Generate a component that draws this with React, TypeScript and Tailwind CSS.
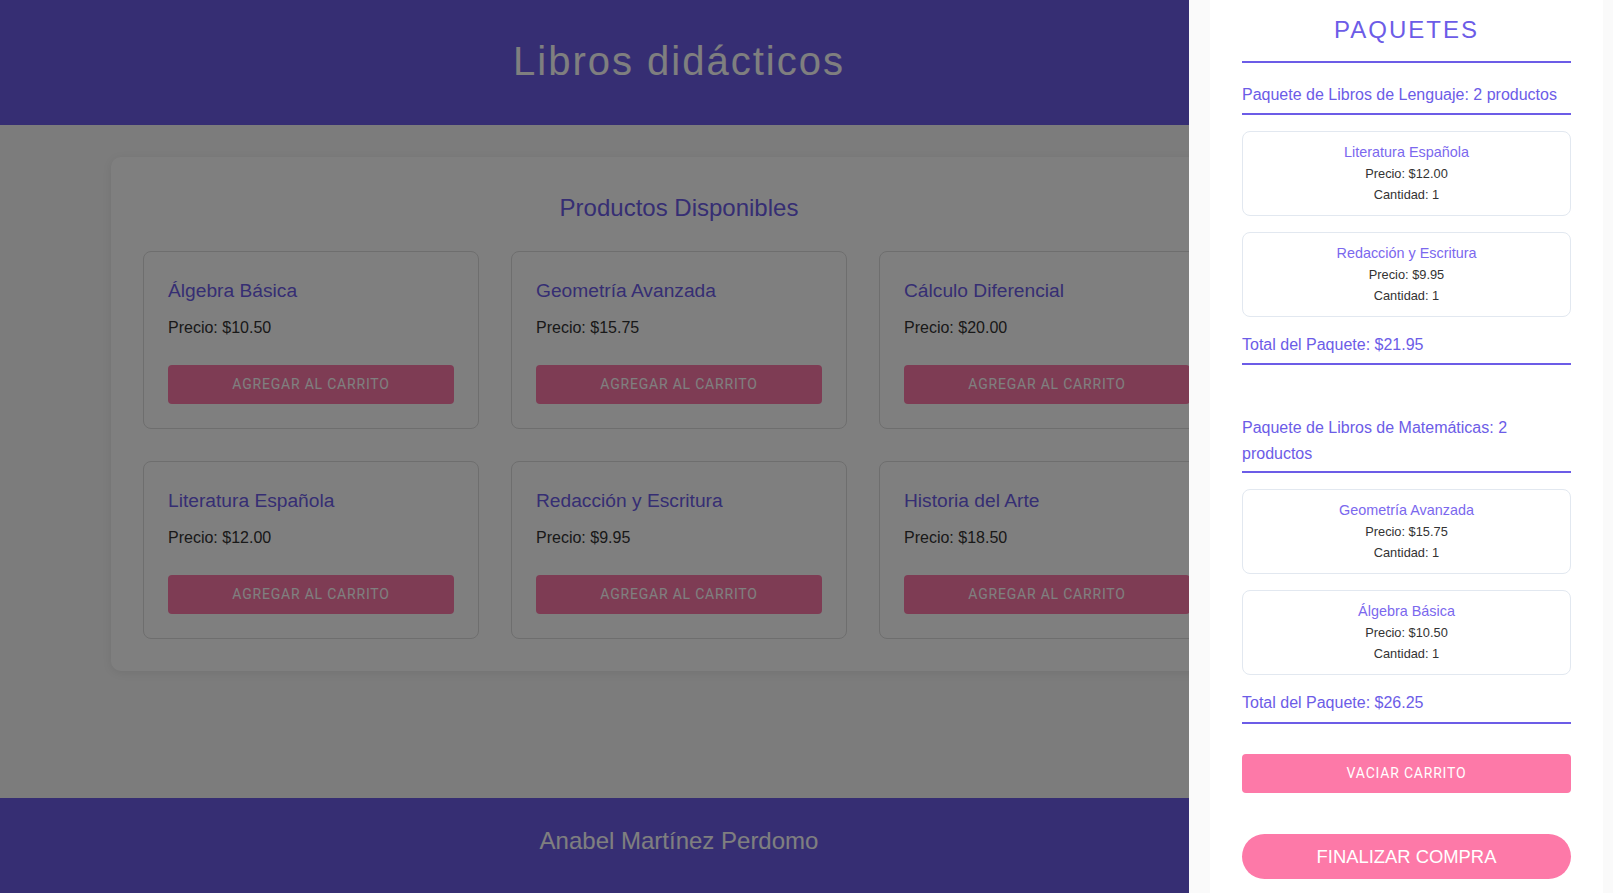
import React from "react";

interface Product {
    name: string;
    price: number;
}

interface Pack {
    title: string;
    items: Product[];
}

const products: Product[] = [
    { name: "Álgebra Básica", price: 10.5 },
    { name: "Geometría Avanzada", price: 15.75 },
    { name: "Cálculo Diferencial", price: 20 },
    { name: "Literatura Española", price: 12 },
    { name: "Redacción y Escritura", price: 9.95 },
    { name: "Historia del Arte", price: 18.5 },
];

const packs: Pack[] = [
    {
        title: "Paquete de Libros de Lenguaje",
        items: [
            { name: "Literatura Española", price: 12 },
            { name: "Redacción y Escritura", price: 9.95 },
        ],
    },
    {
        title: "Paquete de Libros de Matemáticas",
        items: [
            { name: "Geometría Avanzada", price: 15.75 },
            { name: "Álgebra Básica", price: 10.5 },
        ],
    },
];

const ProductCard = ({ product }: { product: Product }) => (
    <div className="bg-white border border-[#dcdcdc] rounded-[8px] px-6 pt-[25px] pb-6 flex flex-col">
        <h3 className="text-[19.2px] leading-[28px] text-[#6c5ce7] mb-[11px]">{product.name}</h3>
        <p className="text-[16px] leading-[24px] text-[#333]">Precio: ${product.price.toFixed(2)}</p>
        <button className="mt-[25px] h-[39px] w-full rounded-[4px] bg-[#fd79a8] text-white text-[14px] font-normal uppercase tracking-[0.8px] font-['Roboto',sans-serif]">
            Agregar al carrito
        </button>
    </div>
);

const PackBlock = ({ pack }: { pack: Pack }) => {
    const total = pack.items.reduce((sum, i) => sum + i.price, 0);
    return (
        <div className="flex flex-col">
            <h3 className="text-[16px] leading-[25.6px] text-[#6c5ce7] pb-[5px] border-b-2 border-[#6c5ce7]">
                {pack.title}: {pack.items.length} productos
            </h3>
            <div className="flex flex-col gap-4 mt-4">
                {pack.items.map((item) => (
                    <div
                        key={item.name}
                        className="border border-[#e2e8f0] rounded-[8px] py-[10px] flex flex-col items-center"
                    >
                        <span className="text-[14.4px] leading-[21px] text-[#7b68ee]">{item.name}</span>
                        <span className="text-[12.8px] leading-[21px] text-[#333]">Precio: ${item.price.toFixed(2)}</span>
                        <span className="text-[12.8px] leading-[21px] text-[#333]">Cantidad: 1</span>
                    </div>
                ))}
            </div>
            <p className="mt-[15px] text-[16px] leading-[25.6px] text-[#6c5ce7] pb-[6px] border-b-2 border-[#6c5ce7]">
                Total del Paquete: ${total.toFixed(2)}
            </p>
        </div>
    );
};

export default function App() {
    return (
        <div className="font-['Liberation_Sans',Arial,sans-serif]">
            <div className="w-[1358px] min-h-screen flex flex-col bg-[#f8f8f8]">
                <header className="h-[125px] bg-[#6c5ce7] flex items-center justify-center pb-[4px]">
                    <h1 className="text-[40px] tracking-[2px] text-white">Libros didácticos</h1>
                </header>
                <main className="flex-1 pt-8">
                    <section className="w-[1136px] mx-auto bg-white rounded-[10px] shadow-[0_2px_10px_rgba(0,0,0,0.08)] p-8">
                        <h2 className="mt-[1px] text-[24px] leading-[36px] text-center text-[#6c5ce7] mb-[25px]">Productos Disponibles</h2>
                        <div className="grid grid-cols-3 gap-8">
                            {products.map((p) => (
                                <ProductCard key={p.name} product={p} />
                            ))}
                        </div>
                    </section>
                </main>
                <footer className="h-[95px] bg-[#6c5ce7] flex justify-center pt-[27px]">
                    <p className="text-[24px] leading-[32px] text-white">Anabel Martínez Perdomo</p>
                </footer>
            </div>

            <div className="fixed inset-0 bg-black/50" />

            <aside className="fixed top-0 right-0 bottom-0 w-[424px] bg-[#fafafa] flex">
                <div className="ml-[21px] mr-[10px] flex-1 bg-white px-8 pt-3 overflow-hidden flex flex-col">
                    <h2 className="text-[24px] leading-[36px] tracking-[2px] text-center text-[#6c5ce7] pb-[13px] border-b-2 border-[#6c5ce7]">
                        PAQUETES
                    </h2>
                    <div className="mt-[19px] flex flex-col gap-[50px]">
                        {packs.map((pack) => (
                            <PackBlock key={pack.title} pack={pack} />
                        ))}
                    </div>
                    <button className="mt-[30px] w-full h-[39px] shrink-0 rounded-[4px] bg-[#fd79a8] text-white text-[14px] font-normal uppercase tracking-[0.8px] font-['Roboto',sans-serif]">
                        Vaciar carrito
                    </button>
                    <button className="mt-[41px] w-full h-[45px] shrink-0 rounded-full bg-[#fd79a8] text-white text-[18.4px] uppercase">
                        Finalizar compra
                    </button>
                </div>
            </aside>
        </div>
    );
}
